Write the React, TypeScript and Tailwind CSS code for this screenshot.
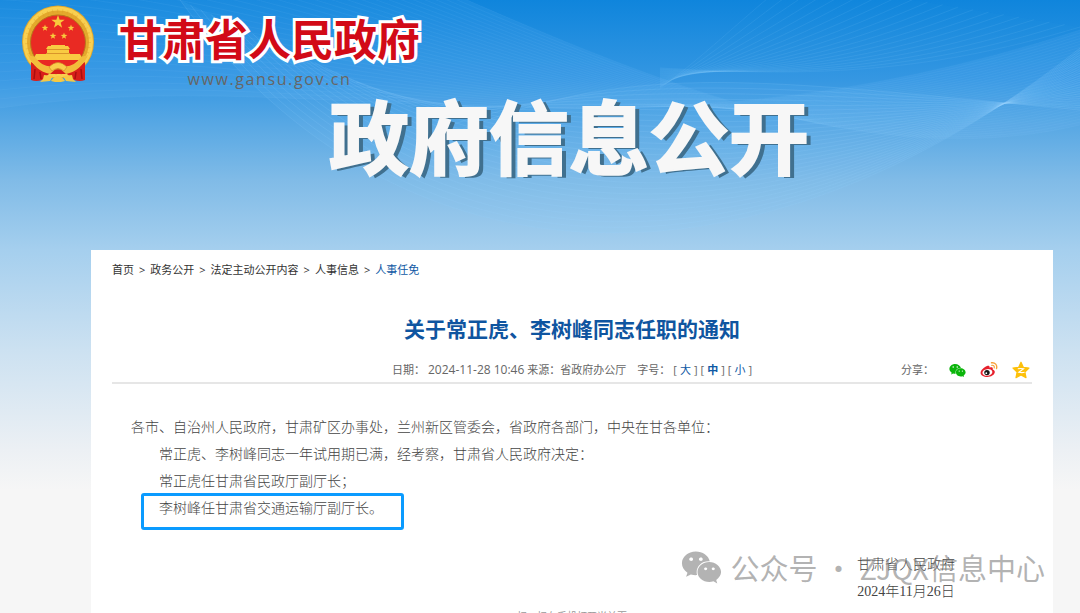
import type { ReactNode } from "react";
import { FaWeixin } from "react-icons/fa";

type Curve = number[];

interface WaveFamily {
  from: Curve;
  to: Curve;
  count: number;
  opacity: number;
  fill: number;
}

const WAVES: WaveFamily[] = [
  {
    from: [0, -190, 430, -50, 760, 200, 1080, 125],
    to: [0, 108, 330, 60, 620, 180, 1080, 30],
    count: 34,
    opacity: 0.07,
    fill: 0.1,
  },
  {
    from: [180, 0, 400, 302, 760, 302, 1080, 48],
    to: [460, 130, 640, 60, 760, 80, 1080, 110],
    count: 28,
    opacity: 0.14,
    fill: 0.08,
  },
  {
    from: [660, 88, 700, 60, 740, 20, 790, -20],
    to: [660, 68, 800, 76, 920, 76, 1080, 27],
    count: 20,
    opacity: 0.1,
    fill: 0.02,
  },
];

const BREADCRUMBS = ["首页", "政务公开", "法定主动公开内容", "人事信息"];

const FONT_SIZES = [
  { label: "大", active: false },
  { label: "中", active: true },
  { label: "小", active: false },
];

function toPath(c: Curve): string {
  return `M${c[0]} ${c[1]}C${c[2]} ${c[3]} ${c[4]} ${c[5]} ${c[6]} ${c[7]}`;
}

function mix(a: Curve, b: Curve, t: number): Curve {
  return a.map((value, i) => Math.round((value + (b[i] - value) * t) * 10) / 10);
}

function areaPath({ from, to }: WaveFamily): string {
  return `${toPath(from)}L${to[6]} ${to[7]}C${to[4]} ${to[5]} ${to[2]} ${to[3]} ${to[0]} ${to[1]}Z`;
}

function Waves() {
  return (
    <svg
      className="absolute inset-x-0 top-0 h-[300px] w-full"
      viewBox="0 0 1080 300"
      preserveAspectRatio="none"
      aria-hidden="true"
    >
      {WAVES.map((wave, w) => (
        <g key={w} fill="none" stroke="#9ed8ff">
          <path d={areaPath(wave)} fill="#7cc8ff" fillOpacity={wave.fill} stroke="none" />
          {Array.from({ length: wave.count }, (_, i) => (
            <path
              key={i}
              d={toPath(mix(wave.from, wave.to, i / (wave.count - 1)))}
              strokeOpacity={wave.opacity}
            />
          ))}
        </g>
      ))}
    </svg>
  );
}

function Star({ x, y, r }: { x: number; y: number; r: number }) {
  const points = Array.from({ length: 10 }, (_, i) => {
    const radius = i % 2 === 0 ? r : r * 0.4;
    const angle = (Math.PI / 5) * i - Math.PI / 2;
    return `${x + radius * Math.cos(angle)},${y + radius * Math.sin(angle)}`;
  }).join(" ");
  return <polygon points={points} fill="#f8c93c" />;
}

function Emblem() {
  return (
    <svg className="h-[78px] w-[72px] shrink-0" viewBox="0 0 72 78" aria-hidden="true">
      <path d="M11 50 9 75Q14 77 20 75L36 66 52 75Q58 77 63 75L61 50Z" fill="#d81e1a" />
      <ellipse cx="36" cy="37" rx="36" ry="36.5" fill="#e4a92c" />
      <ellipse cx="36" cy="37" rx="33" ry="33.5" fill="none" stroke="#f9d050" strokeWidth="4" />
      <ellipse
        cx="36"
        cy="37"
        rx="31"
        ry="31"
        fill="none"
        stroke="#d99a28"
        strokeWidth="4"
        strokeDasharray="1 4"
        opacity="0.35"
      />
      <ellipse cx="36" cy="37.5" rx="27.5" ry="27.5" fill="#e92a23" stroke="#b8771b" />
      <path d="M14 49h44l3 6H11Z" fill="#f9cb42" />
      <path d="M25 48v-4h-1l2-3h3v-1h14v1h3l2 3h-1v4Z" fill="#f9cb42" />
      <path d="M25 44.5h22M24 48.5h24" stroke="#d9952a" />
      <path d="M9 57Q20 66 36 65 52 66 63 57L63 75 52 75 45 69H27L20 75 9 75Z" fill="#d81e1a" />
      <path d="M13 64 12 74M18 67 19 74M59 64 60 74M54 67 53 74" stroke="#a90f10" strokeWidth="1.5" />
      <path d="M6 50Q13 66 28 69L36 62 44 69Q59 66 66 50L59 52Q50 65 36 60 22 65 13 52Z" fill="#f2bd3b" />
      <path d="M27 62Q36 53 45 62L42 66Q36 61 30 66Z" fill="#f9cf4c" stroke="#c98a20" strokeWidth="0.6" />
      <path d="M22 70 31 71 28 76 18 77 21 74ZM50 70 41 71 44 76 54 77 51 74Z" fill="#f6c944" />
      <path d="M29 76Q36 66 43 76L39 77H33Z" fill="#f6c944" />
      <Star x={36} y={17} r={7} />
      <Star x={23} y={23} r={3.5} />
      <Star x={49} y={23} r={3.5} />
      <Star x={31} y={31} r={3.5} />
      <Star x={42} y={31} r={3.5} />
    </svg>
  );
}

function WeiboIcon() {
  return (
    <svg className="size-[18px]" viewBox="0 0 18 18" fill="none" aria-hidden="true">
      <path
        d="M7 5C8.5 4.3 9.8 4.6 9.6 6.7 11.5 6 13.3 6.2 12.7 8.4 14.3 9 15 10 14.8 11.3 14.2 14 11 16 7.5 16 3.5 16 .6 14.3.6 11.8.6 9.3 4 6.2 7 5Z"
        fill="#e6202c"
      />
      <ellipse cx="7.4" cy="11.4" rx="5" ry="3.3" fill="#fff" transform="rotate(-8 7.4 11.4)" />
      <circle cx="7" cy="11.6" r="2.7" fill="#161616" />
      <circle cx="6.3" cy="12.2" r="0.9" fill="#fff" />
      <path d="M11.5 1.8C15 1.2 17.5 4 16.5 7.5" stroke="#f7a23b" strokeWidth="1.4" strokeLinecap="round" />
      <path d="M11.8 4.3C13.6 4 14.7 5.3 14.2 7" stroke="#f7a23b" strokeWidth="1.2" strokeLinecap="round" />
    </svg>
  );
}

function QzoneIcon() {
  return (
    <svg className="size-[18px]" viewBox="0 0 18 18" fill="none" aria-hidden="true">
      <path
        d="M9 1.2 11.3 6.3 17 7 12.9 11 14 16.6 9 13.9 4 16.6 5.1 11 1 7 6.7 6.3Z"
        fill="#fdc00a"
        stroke="#fdc00a"
        strokeWidth="1.2"
        strokeLinejoin="round"
      />
      <path d="M5.8 7.8Q9 7.2 11.6 7.8L6.8 11.3Q10 12 12.6 11.3" stroke="#fff" strokeWidth="1.1" />
    </svg>
  );
}

function ShareLink({ label, children }: { label: string; children: ReactNode }) {
  return (
    <a href="#" aria-label={label} className="flex size-[18px] items-center justify-center">
      {children}
    </a>
  );
}

function Breadcrumb() {
  return (
    <nav className="flex items-center gap-[5px] text-[11px] leading-5 text-[#333]">
      {BREADCRUMBS.map((item) => (
        <span key={item} className="flex gap-[5px]">
          <a href="#">{item}</a>
          <span>&gt;</span>
        </span>
      ))}
      <a href="#" className="text-[#0f59a4]">
        人事任免
      </a>
    </nav>
  );
}

function ArticleMeta() {
  return (
    <div className="grid grid-cols-[1fr_auto_1fr] items-center border-b-2 border-[#e6e6e6] text-[11px] leading-6 text-[#666]">
      <div className="col-start-2 flex items-center gap-[3px]">
        <span>日期：</span>
        <span className="text-[12px]">2024-11-28 10:46</span>
        <span>来源：省政府办公厅</span>
        <span className="ml-2">字号：</span>
        {FONT_SIZES.map(({ label, active }) => (
          <span key={label} className="flex gap-[3px]">
            [
            <button type="button" className={active ? "font-bold text-[#0f59a4]" : "text-[#0f59a4]"}>
              {label}
            </button>
            ]
          </span>
        ))}
      </div>
      <div className="flex items-center justify-end gap-[14px] pr-[2px]">
        <span>分享：</span>
        <ShareLink label="微信">
          <FaWeixin className="size-[17px] text-[#0bb50b]" />
        </ShareLink>
        <ShareLink label="微博">
          <WeiboIcon />
        </ShareLink>
        <ShareLink label="QQ空间">
          <QzoneIcon />
        </ShareLink>
      </div>
    </div>
  );
}

function ArticleBody() {
  return (
    <div className="mt-[30px] pl-[19px] pr-[77px] font-['Liberation_Serif','Noto_Sans_CJK_SC',serif] text-[14px] font-light leading-[27px] text-[#444]">
      <p>各市、自治州人民政府，甘肃矿区办事处，兰州新区管委会，省政府各部门，中央在甘各单位：</p>
      <p className="indent-[28px]">常正虎、李树峰同志一年试用期已满，经考察，甘肃省人民政府决定：</p>
      <p className="indent-[28px]">常正虎任甘肃省民政厅副厅长；</p>
      <p className="relative indent-[28px]">
        李树峰任甘肃省交通运输厅副厅长。
        <span className="absolute -bottom-2 -top-0.5 left-[10px] w-[263px] rounded-[3px] border-[3px] border-[#0a9bff]" />
      </p>
      <div className="mt-[29px] flex flex-col items-end">
        <div className="text-center">
          <p>甘肃省人民政府</p>
          <p>2024年11月26日</p>
        </div>
      </div>
    </div>
  );
}

function Watermark() {
  return (
    <div className="absolute right-2 top-[295px] flex items-center gap-2 font-['Noto_Sans_CJK_SC',sans-serif] text-[29px] leading-[44px] text-[#808080]/60">
      <FaWeixin className="size-[41px]" />
      <span>公众号 · ZJQX信息中心</span>
    </div>
  );
}

export default function App() {
  return (
    <div className="relative h-screen overflow-hidden bg-[#f6f6f6] bg-[linear-gradient(#0f85dc_0px,#3597e2_80px,#58a8e4_125px,#80bbe7_180px,#a5cfee_250px,#cce1f1_350px,#ecf0f4_450px,#f6f6f6_490px)] font-['Open_Sans','Noto_Sans_CJK_SC',sans-serif]">
      <Waves />
      <header className="relative">
        <div className="flex h-[90px] gap-[25px] pl-[22px] pt-[5px]">
          <Emblem />
          <div className="flex flex-col items-center pt-[7px]">
            <span className="text-[43px] font-bold leading-[56px] text-[#d20a17] [-webkit-text-stroke:6px_white] [paint-order:stroke]">
              甘肃省人民政府
            </span>
            <span className="text-[16px] leading-[22px] tracking-widest text-[#666]">www.gansu.gov.cn</span>
          </div>
        </div>
        <h1 className="pl-[58px] text-center text-[80px] font-bold leading-[94px] text-[#f7f7f7] [-webkit-text-stroke:2px_#f7f7f7] [text-shadow:5px_2px_0_#40708f]">
          政府信息公开
        </h1>
      </header>
      <main className="relative ml-[91px] mr-[27px] mt-[66px] bg-white px-[21px] pt-[10px]">
        <Breadcrumb />
        <h2 className="mt-[34px] text-center text-[21px] font-bold leading-[30px] text-[#0f55a0]">
          关于常正虎、李树峰同志任职的通知
        </h2>
        <div className="mt-[14px]">
          <ArticleMeta />
        </div>
        <ArticleBody />
        <p className="mt-1 text-center text-[10px] leading-[14px] text-[#999]">扫一扫在手机打开当前页</p>
        <Watermark />
      </main>
    </div>
  );
}
